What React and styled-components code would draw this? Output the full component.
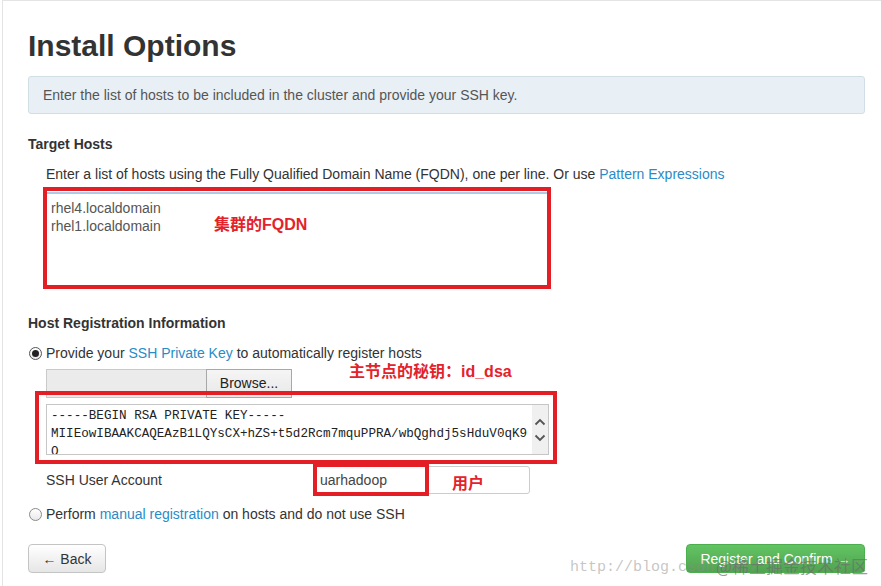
import React from "react";
import styled, { createGlobalStyle } from "styled-components";

const GlobalStyle = createGlobalStyle`
  html, body { margin: 0; padding: 0; background: #fff; }
  body {
    font-family: "Liberation Sans", Arial, "Noto Sans CJK SC", sans-serif;
    font-size: 14px;
    color: #333;
  }
  * { box-sizing: border-box; }
`;

const Page = styled.div`
  margin-left: 2px;
  border-left: 1px solid #e4e4e4;
  border-top: 1px solid #e4e4e4;
  min-height: 586px;
  padding: 28px 16px 0 25px;
  width: 879px;
`;

const Title = styled.h1`
  margin: 0 0 14px;
  font-size: 30px;
  line-height: 33px;
  font-weight: bold;
  color: #333;
`;

const Alert = styled.div`
  background: #e9f0f5;
  border: 1px solid #d2dee6;
  border-radius: 3px;
  padding: 8px 14px;
  line-height: 20px;
  color: #555;
`;

const SectionTitle = styled.h4`
  margin: ${(p) => p.$top}px 0 10px;
  font-size: 14px;
  line-height: 20px;
  font-weight: bold;
  color: #333;
`;

const Indent = styled.div`
  padding-left: 18px;
`;

const Line = styled.div`
  line-height: 20px;
`;

const Link = styled.a`
  color: #2a8bc6;
  text-decoration: none;
`;

const Annotated = styled.div`
  position: relative;
  margin-top: ${(p) => p.$top || 0}px;
  width: ${(p) => p.$w}px;
`;

const RedFrame = styled.div`
  position: absolute;
  top: ${(p) => p.$t}px;
  left: ${(p) => p.$l}px;
  right: ${(p) => p.$r}px;
  bottom: ${(p) => p.$b}px;
  border: 4px solid #e31e24;
  pointer-events: none;
`;

const Note = styled.span`
  position: absolute;
  top: ${(p) => p.$t}px;
  left: ${(p) => p.$l}px;
  color: #e4222b;
  font-weight: bold;
  font-size: 16px;
  line-height: 20px;
  white-space: nowrap;
  font-family: "Liberation Sans", Arial, "Noto Sans CJK SC", sans-serif;
`;

const HostsArea = styled.div`
  height: 94px;
  border: 1px solid #c9ced6;
  border-top: 2px solid #a9cde9;
  padding: 5px 4px;
  line-height: 18px;
  color: #555;
  white-space: pre;
`;

const RadioRow = styled.label`
  display: flex;
  align-items: center;
  line-height: 20px;
  margin-top: ${(p) => p.$top || 0}px;
`;

const Radio = styled.span`
  width: 13px;
  height: 13px;
  margin: 0 4px 0 1px;
  border-radius: 50%;
  border: 1px solid ${(p) => (p.$checked ? "#555" : "#8a8a8a")};
  background: linear-gradient(#fff, #e9e9e9);
  display: flex;
  align-items: center;
  justify-content: center;
  &::after {
    content: "";
    width: 7px;
    height: 7px;
    border-radius: 50%;
    background: ${(p) => (p.$checked ? "#222" : "transparent")};
  }
`;

const FileRow = styled.div`
  position: relative;
  display: flex;
  height: 29px;
  margin-top: 6px;
`;

const FileField = styled.div`
  width: 160px;
  background: #ebebeb;
  border: 1px solid #cacaca;
  border-right: none;
`;

const BrowseButton = styled.div`
  width: 86px;
  background: linear-gradient(#f5f5f5, #e8e8e8);
  border: 1px solid #a8a8a8;
  display: flex;
  align-items: center;
  justify-content: center;
  color: #222;
  padding-bottom: 1px;
`;

const KeyBox = styled.div`
  display: flex;
  height: 51px;
  border: 1px solid #c6c6c6;
`;

const KeyText = styled.div`
  flex: 1;
  overflow: hidden;
  padding: 2px 4px;
  font-family: "Liberation Mono", "Courier New", monospace;
  font-size: 12.6px;
  line-height: 18px;
  white-space: pre;
  color: #222;
`;

const ScrollBar = styled.div`
  width: 16px;
  background: #f0f0f0;
  display: flex;
  flex-direction: column;
  align-items: center;
  justify-content: center;
  gap: 8px;
`;

const UserRow = styled.div`
  display: flex;
  align-items: center;
  margin-top: 11px;
`;

const UserLabel = styled.span`
  width: 267px;
  line-height: 20px;
`;

const UserInput = styled.div`
  width: 217px;
  height: 28px;
  border: 1px solid #ccc;
  border-radius: 3px;
  padding: 0 6px;
  display: flex;
  align-items: center;
  color: #444;
`;

const Footer = styled.div`
  position: relative;
  display: flex;
  justify-content: space-between;
  margin-top: 20px;
`;

const Button = styled.div`
  height: 29px;
  width: ${(p) => p.$w}px;
  border-radius: 4px;
  display: flex;
  align-items: center;
  justify-content: center;
  font-size: 14px;
  border: 1px solid ${(p) => (p.$primary ? "#4cae4c" : "#c4c4c4")};
  color: ${(p) => (p.$primary ? "#fff" : "#333")};
  background: ${(p) =>
    p.$primary
      ? "linear-gradient(#62c462, #51a351)"
      : "linear-gradient(#fff, #e6e6e6)"};
`;

const Watermark = styled.span`
  position: absolute;
  top: ${(p) => p.$t}px;
  left: ${(p) => p.$l}px;
  font-size: ${(p) => p.$size}px;
  line-height: 20px;
  color: ${(p) => p.$color};
  white-space: nowrap;
  pointer-events: none;
  font-family: ${(p) =>
    p.$mono
      ? `"Liberation Mono", monospace`
      : `"Noto Sans CJK SC", sans-serif`};
`;

const Chevron = ({ up }) => (
  <svg width="12" height="8" viewBox="0 0 12 8">
    <path
      d={up ? "M1.5 6.5 L6 2 L10.5 6.5" : "M1.5 1.5 L6 6 L10.5 1.5"}
      fill="none"
      stroke="#555"
      strokeWidth="1.8"
    />
  </svg>
);

export default function App() {
  return (
    <>
      <GlobalStyle />
      <Page>
        <Title>Install Options</Title>
        <Alert>
          Enter the list of hosts to be included in the cluster and provide your SSH key.
        </Alert>

        <SectionTitle $top={20}>Target Hosts</SectionTitle>
        <Indent>
          <Line>
            Enter a list of hosts using the Fully Qualified Domain Name (FQDN), one per line. Or use{" "}
            <Link>Pattern Expressions</Link>
          </Line>
          <Annotated $top={8} $w={502}>
            <HostsArea>{"rhel4.localdomain\nrhel1.localdomain"}</HostsArea>
            <RedFrame $t={-5} $l={-3} $r={-3} $b={-3} />
            <Note $t={23} $l={168}>集群的FQDN</Note>
          </Annotated>
        </Indent>

        <SectionTitle $top={27}>Host Registration Information</SectionTitle>
        <RadioRow>
          <Radio $checked />
          <span>
            Provide your <Link>SSH Private Key</Link> to automatically register hosts
          </span>
        </RadioRow>
        <Indent>
          <FileRow>
            <FileField />
            <BrowseButton>Browse...</BrowseButton>
            <Note $t={-7} $l={303}>主节点的秘钥：id_dsa</Note>
          </FileRow>
          <Annotated $top={6} $w={503}>
            <KeyBox>
              <KeyText>
                {"-----BEGIN RSA PRIVATE KEY-----\nMIIEowIBAAKCAQEAzB1LQYsCX+hZS+t5d2Rcm7mquPPRA/wbQghdj5sHduV0qK9\nO"}
              </KeyText>
              <ScrollBar>
                <Chevron up />
                <Chevron />
              </ScrollBar>
            </KeyBox>
            <RedFrame $t={-13} $l={-11} $r={-8} $b={-9} />
          </Annotated>
          <UserRow>
            <UserLabel>SSH User Account</UserLabel>
            <Annotated $w={217}>
              <UserInput>uarhadoop</UserInput>
              <RedFrame $t={-3} $l={0} $r={101} $b={-2} />
              <Note $t={8} $l={139}>用户</Note>
            </Annotated>
          </UserRow>
        </Indent>
        <RadioRow $top={10}>
          <Radio />
          <span>
            Perform <Link>manual registration</Link> on hosts and do not use SSH
          </span>
        </RadioRow>

        <Footer>
          <Button $w={78}>← Back</Button>
          <Button $w={179} $primary>Register and Confirm →</Button>
          <Watermark $t={14} $l={542} $size={15} $mono $color="rgba(140,140,140,0.5)">
            http://blog.csdn.net/
          </Watermark>
          <Watermark $t={12} $l={688} $size={17} $color="rgba(110,110,110,0.7)">
            @稀土掘金技术社区
          </Watermark>
        </Footer>
      </Page>
    </>
  );
}
